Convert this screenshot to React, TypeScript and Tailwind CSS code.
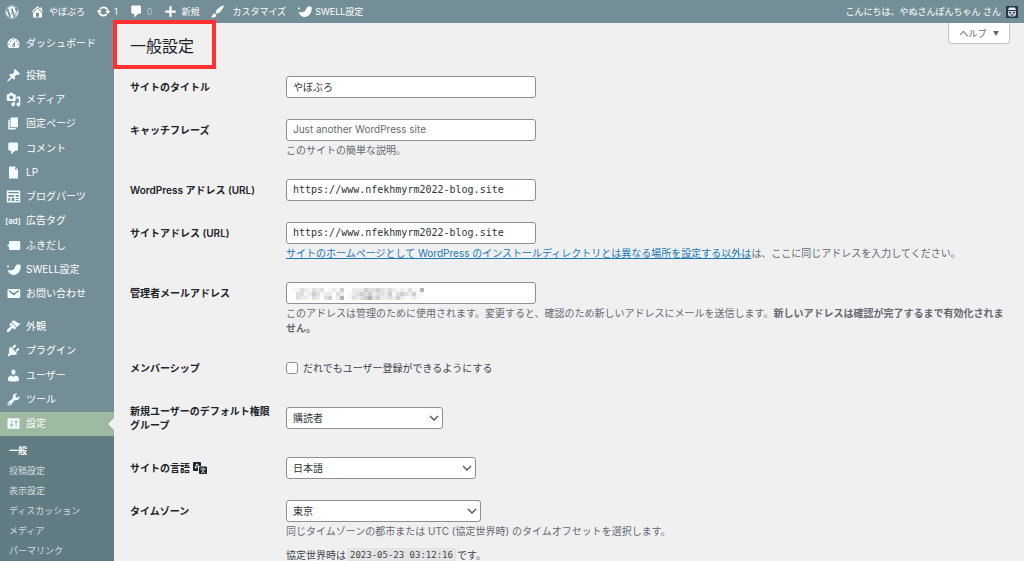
import React from "react";
import { FaWordpress } from "react-icons/fa";

const icons: Record<string, string> = {
  home: "M16 8.5l1.53 1.53-1.06 1.06L10 4.6l-6.47 6.49-1.06-1.06L10 2.5l4 4v-2h2v4zm-6-2.46l6 5.99V18H4v-5.97zM12 17v-5H8v5h4z",
  update:
    "M10.2 3.28c3.53 0 6.43 2.61 6.92 6h2.08l-3.5 4-3.5-4h2.32c-.45-1.97-2.21-3.45-4.32-3.45-1.45 0-2.73.71-3.54 1.78L4.95 5.66C6.23 4.2 8.11 3.28 10.2 3.28zm-.4 13.44c-3.52 0-6.43-2.61-6.92-6H.8l3.5-4c1.17 1.33 2.33 2.67 3.5 4H5.48c.45 1.97 2.21 3.45 4.32 3.45 1.45 0 2.73-.71 3.54-1.78l1.71 1.95c-1.28 1.46-3.15 2.38-5.25 2.38z",
  plus: "M17 8.5v3h-5.5V17h-3v-5.5H3v-3h5.5V3h3v5.5z",
  brush:
    "M18.33 3.57s.27-.8-.31-1.36c-.53-.52-1.22-.24-1.22-.24-.61.3-5.76 3.47-7.67 5.57-.86.96-2.06 3.79-1.09 4.82.92.98 3.96-.17 4.79-1 2.06-2.06 5.21-7.17 5.5-7.79zM1.4 17.65c2.37-1.56 1.46-3.41 3.23-4.64.93-.65 2.22-.62 3.08.29.63.67.8 2.57-.16 3.46-1.57 1.45-4 1.55-6.15.89z",
  dashboard:
    "M3.76 16h12.48c1.1-1.37 1.76-3.11 1.76-5 0-4.42-3.58-8-8-8s-8 3.58-8 8c0 1.89.66 3.63 1.76 5zM10 4c.55 0 1 .45 1 1s-.45 1-1 1-1-.45-1-1 .45-1 1-1zM6 6c.55 0 1 .45 1 1s-.45 1-1 1-1-.45-1-1 .45-1 1-1zm8 0c.55 0 1 .45 1 1s-.45 1-1 1-1-.45-1-1 .45-1 1-1zm-5.37 5.55L12 7v6c0 1.1-.9 2-2 2s-2-.9-2-2c0-.57.24-1.08.63-1.45zM4 10c.55 0 1 .45 1 1s-.45 1-1 1-1-.45-1-1 .45-1 1-1zm12 0c.55 0 1 .45 1 1s-.45 1-1 1-1-.45-1-1 .45-1 1-1zm-5 3c0-.55-.45-1-1-1s-1 .45-1 1 .45 1 1 1 1-.45 1-1z",
  post: "M10.44 3.02l1.82-1.82 6.36 6.35-1.83 1.82c-1.05-.68-2.48-.57-3.41.36l-.75.75c-.92.93-1.04 2.35-.35 3.41l-1.83 1.82-2.41-2.41-2.8 2.79c-.42.42-3.38 2.71-3.8 2.29s1.86-3.39 2.28-3.81l2.79-2.79L4.1 9.36l1.83-1.82c1.05.69 2.48.57 3.4-.36l.75-.75c.93-.92 1.05-2.35.36-3.41z",
  media:
    "M13 11V4c0-.55-.45-1-1-1h-1.67L9 1H5L3.67 3H2c-.55 0-1 .45-1 1v7c0 .55.45 1 1 1h10c.55 0 1-.45 1-1zM7 4.5c1.38 0 2.5 1.12 2.5 2.5S8.38 9.5 7 9.5 4.5 8.38 4.5 7 5.62 4.5 7 4.5zM14 6h5v10.5c0 1.38-1.12 2.5-2.5 2.5S14 17.88 14 16.5s1.12-2.5 2.5-2.5c.17 0 .34.02.5.05V9h-3V6zm-4 8.05V13h2v3.5c0 1.38-1.12 2.5-2.5 2.5S7 17.88 7 16.5 8.12 14 9.5 14c.17 0 .34.02.5.05z",
  page: "M6 15V2h10v13H6zm-1 1h8v2H3V5h2v11z",
  comments:
    "M5 2h9c1.1 0 2 .9 2 2v7c0 1.1-.9 2-2 2h-2l-5 5v-5H5c-1.1 0-2-.9-2-2V4c0-1.1.9-2 2-2z",
  file: "M12 2l4 4v12H4V2h8zm0 4h3l-3-3v3z",
  parts:
    "M1 2h18v16H1V2zm2 2v1.6h14V4H3zm0 4v2.2h8V8H3zm10 0v2.2h4V8h-4zM3 12v4h2.4v-4H3zm4.4 0v4H11v-4H7.4zM13 12v1.3h4V12h-4zm0 2.7V16h4v-1.3h-4z",
  bubble: "M5.5 4h12A1.5 1.5 0 0119 5.500v9a1.5 1.5 0 01-1.500 1.500h-12A1.5 1.5 0 014 14.500v-3L1 10l3-1.500v-3A1.5 1.5 0 015.500 4z",
  bird: "M19.600 4.300C16.500 2 13.200 3.300 12 7c-1 3-3.800 4.800-9.800 3.600C3.600 15.200 7.200 17.600 11 17.200c5.600-.6 9.200-6.200 8.600-12.900zM1 5.300l2.400-1 .8 1.900L2.300 7.200z",
  mail: "M3.87 4h13.25C18.37 4 19 4.59 19 5.79v8.42c0 1.19-.63 1.79-1.88 1.79H3.87c-1.25 0-1.88-.6-1.88-1.79V5.79c0-1.2.63-1.79 1.88-1.79zm6.62 8.6l6.74-5.53c.24-.2.43-.66.13-1.07-.29-.41-.82-.42-1.17-.17l-5.7 3.86L4.8 5.83c-.35-.25-.88-.24-1.17.17-.3.41-.11.87.13 1.07z",
  appearance:
    "M14.48 11.06L7.41 3.99l1.5-1.5c.5-.56 2.3-.47 3.51.32 1.21.8 1.43 1.28 2.91 2.1 1.18.64 2.45 1.26 4.45.85zm-.71.71L6.7 4.7 4.93 6.47c-.39.39-.39 1.02 0 1.41l1.06 1.06c.39.39.39 1.03 0 1.42-.6.6-1.43 1.11-2.21 1.69-.35.26-.7.53-1.01.84C1.43 14.23.4 16.08 1.4 17.07c.99 1 2.84-.03 4.18-1.36.31-.31.58-.66.85-1.02.57-.78 1.08-1.61 1.69-2.21.39-.39 1.02-.39 1.41 0l1.06 1.06c.39.39 1.02.39 1.41 0z",
  plugins:
    "M13.11 4.36L9.87 7.6 8 5.73l3.24-3.24c.35-.34 1.05-.2 1.56.32.52.51.66 1.21.31 1.55zm-8 1.77l.91-1.12 9.01 9.01-1.19.84c-.71.71-2.63 1.16-3.82 1.16H6.14L4.9 17.26c-.59.59-1.54.59-2.12 0-.59-.58-.59-1.53 0-2.12l1.24-1.24v-3.88c0-1.13.4-3.19 1.09-3.89zm7.26 3.97l3.24-3.24c.34-.35 1.04-.21 1.55.31.52.51.66 1.21.31 1.55l-3.24 3.25z",
  users:
    "M10 9.25c-2.27 0-2.73-3.44-2.73-3.44C7 4.02 7.82 2 9.97 2c2.16 0 2.98 2.02 2.71 3.81 0 0-.41 3.44-2.68 3.44zm0 2.57L12.72 10c2.39 0 4.52 2.33 4.52 4.53v2.49s-3.65 1.13-7.24 1.13c-3.65 0-7.24-1.13-7.24-1.13v-2.49c0-2.25 1.94-4.48 4.47-4.48z",
  tools:
    "M16.68 9.77c-1.34 1.34-3.3 1.67-4.95.99l-5.41 6.52c-.99.99-2.59.99-3.58 0s-.99-2.59 0-3.57l6.52-5.42c-.68-1.65-.35-3.61.99-4.95 1.28-1.28 3.12-1.62 4.72-1.06l-2.89 2.89 2.82 2.82 2.86-2.87c.53 1.58.18 3.39-1.08 4.65zM3.81 16.21c.4.39 1.04.39 1.43 0 .4-.4.4-1.04 0-1.43-.39-.4-1.03-.4-1.43 0-.39.39-.39 1.03 0 1.43z",
  settings:
    "M18 16V4c0-.55-.45-1-1-1H3c-.55 0-1 .45-1 1v12c0 .55.45 1 1 1h14c.55 0 1-.45 1-1zM8 11h1c.55 0 1 .45 1 1s-.45 1-1 1H8v1.5c0 .28-.22.5-.5.5s-.5-.22-.5-.5V13H6c-.55 0-1-.45-1-1s.45-1 1-1h1V5.5c0-.28.22-.5.5-.5s.5.22.5.5V11zm5-2h-1c-.55 0-1-.45-1-1s.45-1 1-1h1V5.5c0-.28.22-.5.5-.5s.5.22.5.5V7h1c.55 0 1 .45 1 1s-.45 1-1 1h-1v5.5c0 .28-.22.5-.5.5s-.5-.22-.5-.5V9z",
};

function Icon({ name, className = "size-[15px]" }: { name: string; className?: string }) {
  return (
    <svg viewBox="0 0 20 20" fill="currentColor" fillRule="evenodd" aria-hidden="true" className={`${className} shrink-0`}>
      <path d={icons[name]} />
    </svg>
  );
}

type Item = { icon: string; label: string };

const contentItems: Item[] = [
  { icon: "post", label: "投稿" },
  { icon: "media", label: "メディア" },
  { icon: "page", label: "固定ページ" },
  { icon: "comments", label: "コメント" },
  { icon: "file", label: "LP" },
  { icon: "parts", label: "ブログパーツ" },
  { icon: "ad", label: "広告タグ" },
  { icon: "bubble", label: "ふきだし" },
  { icon: "bird", label: "SWELL設定" },
  { icon: "mail", label: "お問い合わせ" },
];

const siteItems: Item[] = [
  { icon: "appearance", label: "外観" },
  { icon: "plugins", label: "プラグイン" },
  { icon: "users", label: "ユーザー" },
  { icon: "tools", label: "ツール" },
  { icon: "settings", label: "設定" },
];

const subItems = ["一般", "投稿設定", "表示設定", "ディスカッション", "メディア", "パーマリンク"];

function MenuItem({ icon, label }: Item) {
  const active = label === "設定";
  return (
    <li className={`relative flex-1 ${active ? "bg-[#9ebaa0]" : ""}`}>
      <a href="#" className="flex h-full items-center gap-[5px] pl-[5px] text-white">
        {icon === "ad" ? (
          <span className="w-4 shrink-0 text-center text-[8px] leading-3 font-semibold text-[#f2fcff]">[ad]</span>
        ) : (
          <span className="flex w-4 shrink-0 justify-center text-[#f2fcff]">
            <Icon name={icon} />
          </span>
        )}
        <span>{label}</span>
      </a>
      {active && (
        <span className="absolute top-1/2 right-0 -translate-y-1/2 border-y-[6px] border-r-[6px] border-y-transparent border-r-[#f0f0f1]" />
      )}
    </li>
  );
}

function TopBar() {
  const link = "flex items-center";
  return (
    <header className="flex h-[23px] shrink-0 items-center justify-between bg-[#738e96] pr-[6px] pl-[5px] text-[9px] text-white">
      <nav className="flex items-center gap-[11px]">
        <a href="#" aria-label="WordPress" className="text-[#f2fcff]">
          <FaWordpress className="size-[14px]" />
        </a>
        <a href="#" className={`${link} gap-1`}>
          <Icon name="home" />
          やぼぶろ
        </a>
        <a href="#" className={`${link} gap-[3px]`}>
          <Icon name="update" />1
        </a>
        <a href="#" className={`${link} gap-[3px]`}>
          <Icon name="comments" />
          <span className="text-[#b4c4c9]">0</span>
        </a>
        <a href="#" className={`${link} gap-[3px]`}>
          <Icon name="plus" />
          新規
        </a>
        <a href="#" className={`${link} gap-[7px]`}>
          <Icon name="brush" />
          カスタマイズ
        </a>
        <a href="#" className={`${link} gap-[3px]`}>
          <Icon name="bird" />
          SWELL設定
        </a>
      </nav>
      <a href="#" className="flex items-center gap-[5px]">
        こんにちは、やぬさんぽんちゃん さん
        <svg viewBox="0 0 12 12" aria-hidden="true" className="size-3">
          <rect width="12" height="12" fill="#243746" />
          <path d="M3 1.500h6L10 4H2z" fill="#e9eff2" />
          <path d="M2 5h8v4L8.500 10.500h-5L2 9z" fill="#c5d0d6" />
          <path d="M3 6h2v1.300H3zM7 6h2v1.300H7zM4.500 8.600h3v.9h-3z" fill="#243746" />
        </svg>
      </a>
    </header>
  );
}

function Sidebar() {
  return (
    <aside className="flex w-[114px] shrink-0 flex-col bg-[#738e96] pt-2">
      <ul className="flex h-6 flex-col">
        <MenuItem icon="dashboard" label="ダッシュボード" />
      </ul>
      <ul className="mt-2 flex h-[243px] shrink-0 flex-col">
        {contentItems.map((item) => (
          <MenuItem key={item.label} {...item} />
        ))}
      </ul>
      <ul className="mt-2 flex h-[122px] shrink-0 flex-col">
        {siteItems.map((item) => (
          <MenuItem key={item.label} {...item} />
        ))}
      </ul>
      <ul className="flex-1 bg-[#627c83] pt-1 text-[9px]">
        {subItems.map((label, i) => (
          <li key={label}>
            <a href="#" className={`flex h-5 items-center pl-[9px] ${i === 0 ? "font-semibold text-white" : "text-[#d5dde0]"}`}>
              {label}
            </a>
          </li>
        ))}
      </ul>
    </aside>
  );
}

function Row({ id, label, center, children }: { id: string; label: React.ReactNode; center?: boolean; children: React.ReactNode }) {
  return (
    <div className={`grid grid-cols-[156px_1fr] ${center ? "items-center" : "items-start"}`}>
      <label htmlFor={id} className={`pr-3 leading-[14px] font-semibold text-[#1d2327] ${center ? "" : "py-1"}`}>
        {label}
      </label>
      <div className={center ? "py-[7px]" : ""}>{children}</div>
    </div>
  );
}

const field =
  "block h-[22px] w-[250px] rounded-[3px] border border-[#8c8f94] bg-white px-[6px] pb-[2px] text-[#2c3338] placeholder:text-[#646970]";

function Select({ id, value, className }: { id: string; value: string; className: string }) {
  return (
    <div className={`relative ${className}`}>
      <select id={id} className="block h-[22px] w-full appearance-none rounded-[3px] border border-[#8c8f94] bg-white px-[6px] text-[#2c3338]">
        <option>{value}</option>
      </select>
      <svg viewBox="0 0 10 10" fill="none" stroke="#50575e" strokeWidth="1.400" aria-hidden="true" className="pointer-events-none absolute top-[6px] right-[4px] size-[10px]">
        <path d="M1 3l4 4 4-4" />
      </svg>
    </div>
  );
}

const mosaic = [
  "1132132301214002224334323212131150",
  "0331243122032012343423324134324110",
  "0322132034025013234534223242112100",
];
const shades = ["#ffffff", "#f6f6f6", "#ebebeb", "#dfdfdf", "#cfcfcf", "#b2b2b2"];

function Mosaic() {
  return (
    <svg viewBox="0 0 136 12" aria-hidden="true" className="pointer-events-none absolute top-[6px] left-[6px] h-3 w-[136px]">
      {mosaic.flatMap((line, y) =>
        [...line].map((c, x) => <rect key={`${x}-${y}`} x={x * 4} y={y * 4} width="4" height="4" fill={shades[Number(c)]} />),
      )}
    </svg>
  );
}

const hint = "mt-0.5 leading-[15px] text-[#646970]";

export default function App() {
  return (
    <div className="flex h-screen flex-col overflow-hidden bg-[#f0f0f1] font-['Inter','Noto_Sans_CJK_JP',sans-serif] text-[10px] leading-[15px] text-[#3c434a]">
      <TopBar />
      <div className="flex min-h-0 flex-1">
        <Sidebar />
        <main className="min-w-0 flex-1 pr-[14px] pl-4">
          <div className="flex items-start justify-between">
            <div className="relative pt-[11px]">
              <h1 className="text-[16px] leading-6 text-[#1d2327]">一般設定</h1>
              <span className="absolute -top-[3px] -left-[17px] h-[49px] w-[103px] border-4 border-[#ff3131]" />
            </div>
            <button type="button" className="flex h-[21px] w-[62px] items-center justify-center gap-[6px] rounded-b-[3px] border border-t-0 border-[#c3c4c7] bg-white text-[9px] text-[#646970]">
              ヘルプ
              <svg viewBox="0 0 6 5" fill="currentColor" aria-hidden="true" className="h-[5px] w-[6px]">
                <path d="M0 0h6L3 5z" />
              </svg>
            </button>
          </div>
          <form className="mt-[18px] flex flex-col gap-[21px]" onSubmit={(e) => e.preventDefault()}>
            <Row id="title" label="サイトのタイトル">
              <input id="title" type="text" defaultValue="やぼぶろ" className={field} />
            </Row>
            <Row id="tagline" label="キャッチフレーズ">
              <input id="tagline" type="text" placeholder="Just another WordPress site" className={field} />
              <p className={hint}>このサイトの簡単な説明。</p>
            </Row>
            <Row id="wpurl" label="WordPress アドレス (URL)">
              <input id="wpurl" type="url" defaultValue="https://www.nfekhmyrm2022-blog.site" className={`${field} font-['DejaVu_Sans_Mono',monospace]`} />
            </Row>
            <Row id="siteurl" label="サイトアドレス (URL)">
              <input id="siteurl" type="url" defaultValue="https://www.nfekhmyrm2022-blog.site" className={`${field} font-['DejaVu_Sans_Mono',monospace]`} />
              <p className={hint}>
                <a href="#" className="text-[#1878b3] underline">
                  サイトのホームページとして WordPress のインストールディレクトリとは異なる場所を設定する以外は
                </a>
                は、ここに同じアドレスを入力してください。
              </p>
            </Row>
            <Row id="email" label="管理者メールアドレス">
              <div className="relative">
                <input id="email" type="email" className={field} />
                <Mosaic />
              </div>
              <p className={hint}>
                このアドレスは管理のために使用されます。変更すると、確認のため新しいアドレスにメールを送信します。
                <strong className="font-semibold">新しいアドレスは確認が完了するまで有効化されません。</strong>
              </p>
            </Row>
            <Row id="membership" label="メンバーシップ">
              <div className="flex h-[22px] items-center gap-[5px]">
                <input id="membership" type="checkbox" className="size-3 appearance-none rounded-[3px] border border-[#8c8f94] bg-white" />
                <label htmlFor="membership">だれでもユーザー登録ができるようにする</label>
              </div>
            </Row>
            <Row id="role" center label="新規ユーザーのデフォルト権限グループ">
              <Select id="role" value="購読者" className="w-[157px]" />
            </Row>
            <Row
              id="language"
              label={
                <span className="flex items-center gap-[3px]">
                  サイトの言語
                  <svg viewBox="0 0 14 12" aria-hidden="true" className="h-3 w-[14px]">
                    <path d="M1 0h6a1 1 0 011 1v3H5v5H1a1 1 0 01-1-1V1a1 1 0 011-1z" fill="#1d2327" />
                    <path d="M2 6.500l1.700-4.500h.8L5.500 4M2.600 5.200h2" fill="none" stroke="#f0f0f1" />
                    <rect x="6" y="4.500" width="8" height="7.500" rx="1" fill="#1d2327" />
                    <path d="M7.500 7h5M10 5.700V7M8.300 10.800c1.800-.8 2.700-2 3-3.600M8.700 7.500c.5 1.600 1.500 2.700 3.200 3.300" fill="none" stroke="#f0f0f1" strokeWidth=".9" />
                  </svg>
                </span>
              }
            >
              <Select id="language" value="日本語" className="w-[190px]" />
            </Row>
            <Row id="timezone" label="タイムゾーン">
              <Select id="timezone" value="東京" className="w-[195px]" />
              <p className={hint}>同じタイムゾーンの都市または UTC (協定世界時) のタイムオフセットを選択します。</p>
              <p className="mt-[9px] flex gap-px whitespace-nowrap">
                <span>協定世界時は</span>
                <code className="bg-[#e4e4e5] px-[3px] font-['DejaVu_Sans_Mono',monospace] text-[9px]">2023-05-23 03:12:16</code>
                <span>です。</span>
              </p>
            </Row>
          </form>
        </main>
      </div>
    </div>
  );
}
